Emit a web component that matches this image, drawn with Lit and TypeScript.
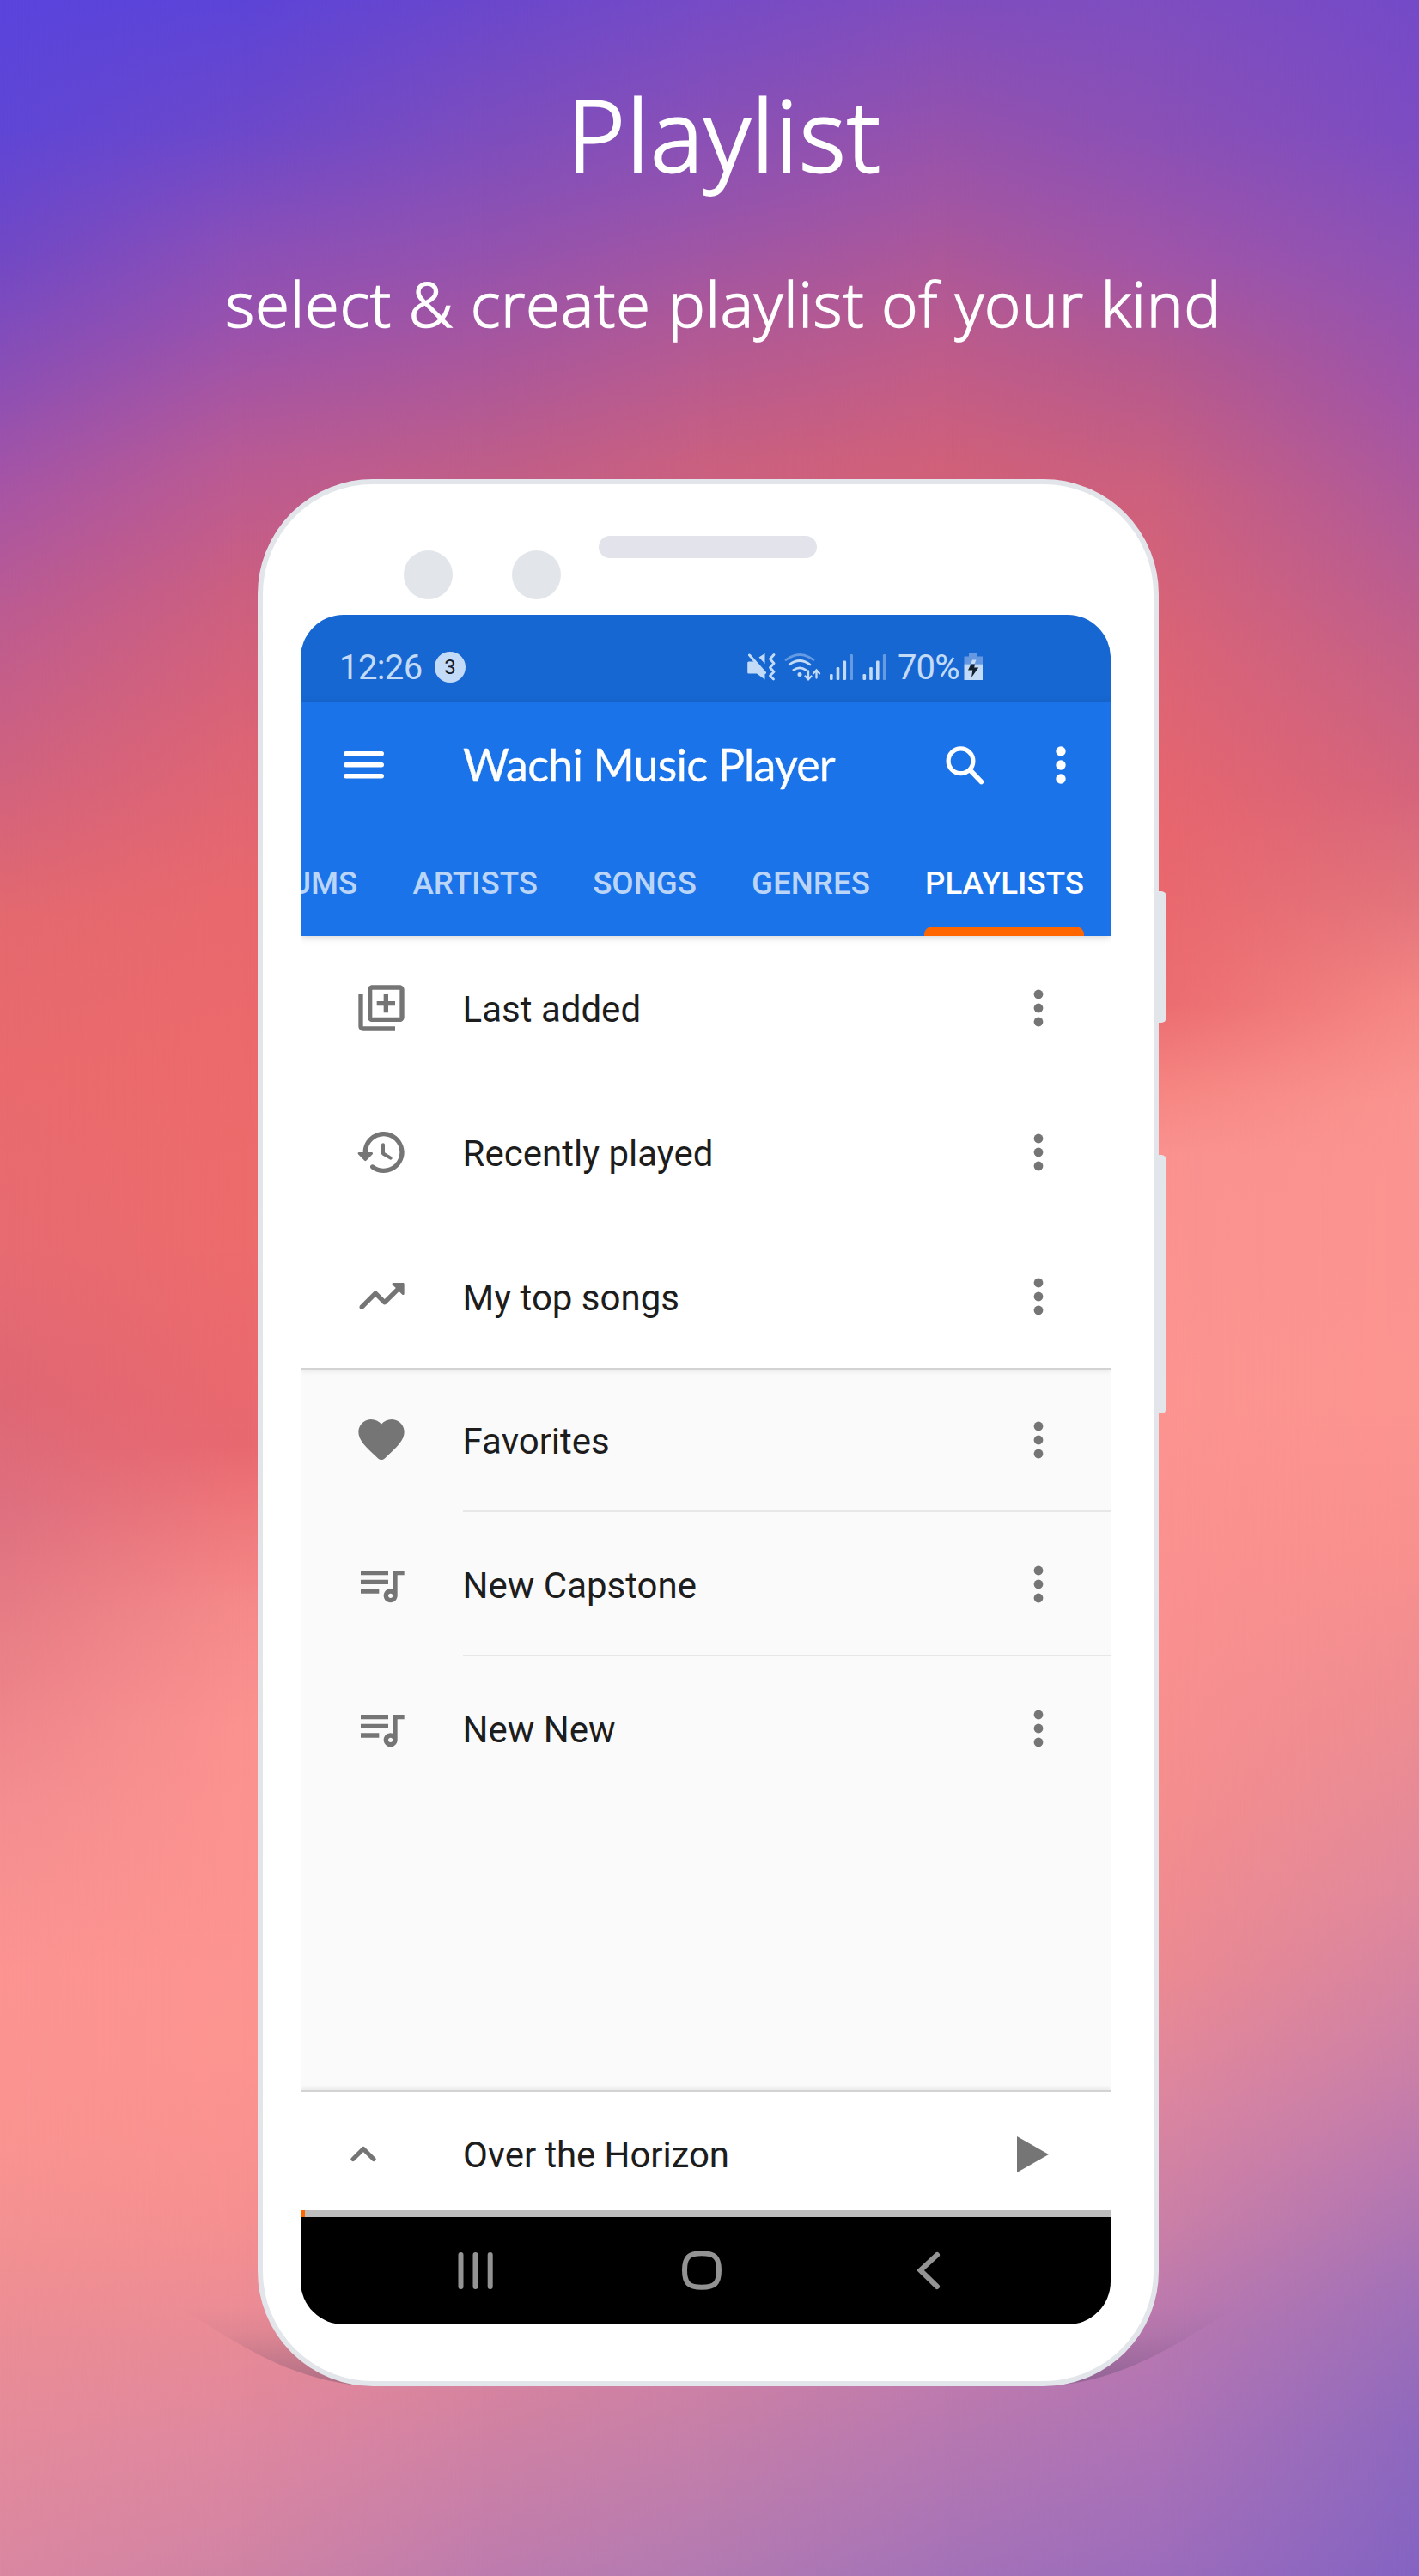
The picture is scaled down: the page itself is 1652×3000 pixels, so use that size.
import { LitElement, html, css, svg } from "lit";
import { customElement } from "lit/decorators.js";

/** Vertical colour ramps of the backdrop: x position in px, then [colour, y px] stops. */
const RAMPS: { x: number; stops: [string, number][] }[] = [
  { x: 0, stops: [["#5a44dc", 0], ["#5f46d6", 150], ["#7048c6", 290], ["#8b4fb5", 440], ["#a855a4", 575], ["#be5c90", 727], ["#d0627f", 900], ["#e4696f", 1070], ["#ea6a6d", 1245], ["#e76b72", 1455], ["#df6774", 1625], ["#de7080", 1760], ["#e97f87", 1913], ["#f48e90", 2105], ["#fc9492", 2296], ["#fa9491", 2487], ["#f29092", 2621], ["#e88c98", 2774], ["#da87a2", 3000]] },
  { x: 280, stops: [["#5c44d8", 0], ["#6c48ca", 153], ["#8a4fb8", 287], ["#9a52ac", 383], ["#b95a94", 536], ["#cc5f80", 689], ["#dc6475", 861], ["#e8686e", 1033], ["#ec6a6b", 1244], ["#ed6b6b", 1435], ["#e86870", 1684], ["#ee777a", 1760], ["#f58a8a", 1875], ["#fb9290", 2009], ["#fc9490", 2392], ["#f69090", 2583], ["#e78a97", 2736], ["#de87a0", 2850], ["#d083a4", 3000]] },
  { x: 560, stops: [["#6a47cc", 0], ["#7c4dbe", 153], ["#9252b0", 287], ["#aa579c", 421], ["#c05e88", 555], ["#e8686e", 1100], ["#fc9490", 2000], ["#fc9490", 2400], ["#d583a0", 2790], ["#be7cae", 3000]] },
  { x: 826, stops: [["#764bc6", 0], ["#844fba", 115], ["#9453ae", 230], ["#b05996", 383], ["#ca6080", 540], ["#e8686e", 1100], ["#fc9490", 2000], ["#f69090", 2400], ["#ca80a6", 2790], ["#b27ab2", 3000]] },
  { x: 1100, stops: [["#804dbe", 0], ["#8f51b1", 115], ["#a055a4", 230], ["#ba5b8e", 383], ["#d0607a", 540], ["#e8686e", 1100], ["#fc9490", 1700], ["#ee8c94", 2400], ["#bc7aae", 2790], ["#a472b8", 3000]] },
  { x: 1350, stops: [["#7e4ec0", 0], ["#8a50b6", 153], ["#a055a8", 306], ["#b4598f", 421], ["#cc607e", 574], ["#dc6475", 765], ["#e8666e", 956], ["#ec6c70", 1170], ["#f68682", 1272], ["#fa9290", 1345], ["#fc9490", 1626], ["#fa9090", 1913], ["#f58e8e", 2105], ["#ec8a92", 2296], ["#dc86a0", 2449], ["#cc80a6", 2583], ["#b878b0", 2717], ["#ac72b6", 2840], ["#9c6cbc", 3000]] },
  { x: 1652, stops: [["#744ac8", 0], ["#7c4cc2", 153], ["#8e52b4", 306], ["#a054a8", 459], ["#b25a98", 612], ["#c46088", 765], ["#d4647c", 918], ["#e2747c", 1052], ["#f48784", 1167], ["#fa9490", 1282], ["#fc9490", 1626], ["#f8908e", 1818], ["#ec8c92", 2009], ["#e0889c", 2200], ["#cc80a6", 2392], ["#b878b0", 2525], ["#a070b8", 2678], ["#8e68be", 2831], ["#8463c2", 3000]] },
];

const rampStyle = (i: number): string => {
  const { x, stops } = RAMPS[i];
  const ramp = `background:linear-gradient(180deg,${stops.map(([c, y]) => `${c} ${y}px`).join(",")});`;
  if (i === 0) return ramp;
  const mask = `linear-gradient(90deg,transparent ${RAMPS[i - 1].x}px,#000 ${x}px)`;
  return `${ramp}-webkit-mask-image:${mask};mask-image:${mask};`;
};

const ICONS = {
  added: svg`<path d="M4 6H2v14c0 1.1.9 2 2 2h14v-2H4V6zm16-4H8c-1.1 0-2 .9-2 2v12c0 1.1.9 2 2 2h12c1.1 0 2-.9 2-2V4c0-1.1-.9-2-2-2zm0 14H8V4h12v12zm-7-2h2v-3h3V9h-3V6h-2v3h-3v2h3z"/>`,
  history: svg`<path d="M13.26 3C8.17 2.86 4 6.95 4 12H2.21c-.45 0-.67.54-.35.85l2.79 2.8c.2.2.51.2.71 0l2.79-2.8c.31-.31.09-.85-.36-.85H6c0-3.9 3.18-7.05 7.1-7 3.72.05 6.85 3.18 6.9 6.9.05 3.91-3.1 7.1-7 7.1-1.61 0-3.1-.55-4.28-1.48-.4-.31-.96-.28-1.32.08-.42.42-.39 1.13.08 1.49C9 20.29 10.91 21 13 21c5.05 0 9.14-4.17 9-9.26-.13-4.69-4.05-8.61-8.74-8.74zm-.51 5c-.41 0-.75.34-.75.75v3.68c0 .35.19.68.49.86l3.12 1.85c.36.21.82.09 1.03-.26.21-.36.09-.82-.26-1.03l-2.88-1.71v-3.4c0-.4-.34-.74-.75-.74z"/>`,
  trending: svg`<path d="M16.85 6.85l1.44 1.44-4.88 4.88-3.29-3.29c-.39-.39-1.02-.39-1.41 0l-6 6.01c-.39.39-.39 1.02 0 1.41.39.39 1.02.39 1.41 0L9.41 12l3.29 3.29c.39.39 1.02.39 1.41 0l5.59-5.58 1.44 1.44c.31.31.85.09.85-.35V6.5c.01-.28-.21-.5-.49-.5h-4.29c-.45 0-.67.54-.36.85z"/>`,
  heart: svg`<path d="M13.35 20.13c-.76.69-1.93.69-2.69-.01l-.11-.1C5.3 15.27 1.87 12.16 2 8.28c.06-1.7.93-3.33 2.34-4.29 2.64-1.8 5.9-.96 7.66 1.1 1.76-2.06 5.02-2.91 7.66-1.1 1.41.96 2.28 2.59 2.34 4.29.14 3.88-3.3 6.99-8.55 11.76l-.1.09z"/>`,
  queue: svg`<path d="M22 6h-5v8.18c-.31-.11-.65-.18-1-.18-1.66 0-3 1.34-3 3s1.34 3 3 3 3-1.34 3-3V8h3V6zm-7 0H3v2h12V6zm0 4H3v2h12v-2zm-4 4H3v2h8v-2zm4 3c0-.55.45-1 1-1s1 .45 1 1-.45 1-1 1-1-.45-1-1z"/>`,
};

type Item = { icon: keyof typeof ICONS; label: string };

const SMART: Item[] = [
  { icon: "added", label: "Last added" },
  { icon: "history", label: "Recently played" },
  { icon: "trending", label: "My top songs" },
];
const CUSTOM: Item[] = [
  { icon: "heart", label: "Favorites" },
  { icon: "queue", label: "New Capstone" },
  { icon: "queue", label: "New New" },
];
const TABS = ["ALBUMS", "ARTISTS", "SONGS", "GENRES", "PLAYLISTS"];

@customElement("phone-status")
export class PhoneStatus extends LitElement {
  static styles = css`
    :host { display: block; height: 101px; background: #1767d2; color: #c4dbf7; font-family: Roboto, sans-serif; }
    .bar { display: flex; align-items: center; height: 122px; padding-left: 45px; }
    .time { font-size: 40px; width: 111px; white-space: nowrap; letter-spacing: -0.6px; }
    .badge { width: 36px; height: 36px; border-radius: 50%; background: #c4dbf7; color: #14202e; font-size: 24px; line-height: 37px; text-align: center; }
    .icons { width: 163px; height: 34px; margin-left: 328px; }
    .pct { font-size: 40px; width: 77px; margin-left: 12px; white-space: nowrap; letter-spacing: -0.9px; }
    .battery { width: 22px; height: 34px; }
    svg { display: block; overflow: visible; flex: none; }
  `;
  render() {
    return html`<div class="bar">
      <span class="time">12:26</span><span class="badge">3</span>
      <svg class="icons" viewBox="870 759 163 34" fill="#c4dbf7" stroke="#c4dbf7" stroke-width="0">
        <path d="M871.500 769.500h6l13 13.500v7.500l-9.500-7h-9.500q-1.300 0-1.300-1.500v-11q0-1.500 1.300-1.500zM890.500 760v12l-7-7.500z" />
        <path d="M872.500 762l18 20.500" stroke-width="3" stroke-linecap="round" />
        <path d="M901 761.500l-4.500 5 4.500 5-4.500 5 4.500 5-4.500 4.500 4 4" fill="none" stroke-width="2.800" stroke-linecap="round" stroke-linejoin="round" />
        <g fill="none" stroke-width="2.700" stroke-linecap="round">
          <path d="M915 767.500q16-12 32 0" opacity="0.450" />
          <path d="M919 773q12-9 24 0M923.800 779.300q7.200-5 14.400 0" />
          <path d="M941 780.500v9.500M937.500 786.500l3.500 3.800 3.500-3.800M950.500 788.500v-8.500M947 783.300l3.500-3.800 3.500 3.800" stroke-width="2.300" />
        </g>
        <circle cx="931" cy="784.500" r="2.500" />
        ${[966, 1004.500].map(
          (x) => svg`<rect x=${x} y="784" width="3.600" height="7" rx="1.300" /><rect x=${x + 7.700} y="776" width="3.600" height="15" rx="1.300" /><rect x=${x + 15.500} y="768.500" width="3.600" height="22.500" rx="1.300" /><rect x=${x + 23.400} y="761" width="3.600" height="30" rx="1.300" opacity="0.450" />`
        )}
      </svg>
      <span class="pct">70%</span>
      <svg class="battery" viewBox="1122 759 22 34">
        <path d="M1128 759.500h10v4h6v9h-21.500v-9h5.500z" fill="#6598e0" />
        <path d="M1122.500 772.500h21.500v18.500h-21.500z" fill="#c4dbf7" />
        <path d="M1132 767.500h4.500l-2 5h-4.500z" fill="#c4dbf7" />
        <path d="M1130.500 772.500h4.500l-.8 4h5l-8.200 11.500 1.300-8.500h-5.300z" fill="#14202e" />
      </svg>
    </div>`;
  }
}

@customElement("app-header")
export class AppHeader extends LitElement {
  static styles = css`
    :host { display: block; position: relative; z-index: 1; height: 273px; background: #1a73e9; color: #fff; box-shadow: 0 2px 8px rgba(0, 0, 0, 0.16); }
    .top { display: flex; align-items: center; height: 147px; padding-left: 50px; }
    .title { font-family: Lato, sans-serif; font-size: 52px; line-height: 60px; width: 561px; margin-left: 92px; padding-bottom: 2px; white-space: nowrap; letter-spacing: -0.8px; -webkit-text-stroke: 0.3px #fff; }
    .tabs { display: flex; justify-content: flex-end; gap: 64.200px; height: 126px; padding-right: 31px; overflow: hidden; font-family: Roboto, sans-serif; font-weight: 500; font-size: 36.700px; line-height: 129px; color: #bad5f8; }
    .tab { position: relative; height: 126px; white-space: nowrap; }
    .tab.on { color: #fff; }
    .mark { position: absolute; left: -1px; right: 0; bottom: 0; height: 11px; border-radius: 9px 9px 0 0; background: #ff6600; }
    svg { display: block; flex: none; }
    .search { margin-right: 81px; }
  `;
  render() {
    return html`
      <div class="top">
        <svg width="47" height="32" viewBox="0 0 47 32" fill="#fff">
          ${[0, 13, 26].map((y) => svg`<rect y=${y} width="47" height="5.400" rx="2.700" />`)}
        </svg>
        <span class="title">Wachi Music Player</span>
        <svg class="search" width="48" height="46" viewBox="0 0 48 46" fill="none" stroke="#fff">
          <circle cx="18.500" cy="18.300" r="14.400" stroke-width="5.200" />
          <path d="M30.500 30L42.500 42.500" stroke-width="5.600" stroke-linecap="round" />
        </svg>
        <svg width="12" height="44" viewBox="0 0 12 44" fill="#fff">
          ${[6, 22, 38].map((y) => svg`<circle cx="6" cy=${y} r="5.700" />`)}
        </svg>
      </div>
      <div class="tabs">
        ${TABS.map((t, i) => html`<span class="tab ${i === 4 ? "on" : ""}">${t}${i === 4 ? html`<i class="mark"></i>` : ""}</span>`)}
      </div>`;
  }
}

@customElement("playlist-row")
export class PlaylistRow extends LitElement {
  static properties = { item: { attribute: false } };
  declare item: Item;
  static styles = css`
    :host { display: block; }
    .row { display: flex; align-items: center; height: 100%; padding: 0 78px 0 62px; }
    .label { flex: 1; margin-left: 62.600px; font: 400 42px/50px Roboto, sans-serif; color: #1d1d1d; padding-top: 4px; white-space: nowrap; }
    svg { display: block; flex: none; }
  `;
  render() {
    return html`<div class="row">
      <svg width="64" height="64" viewBox="0 0 24 24" fill="#757575">${ICONS[this.item.icon]}</svg>
      <span class="label">${this.item.label}</span>
      <svg width="12" height="44" viewBox="0 0 12 44" fill="#757575">
        ${[6, 22, 38].map((y) => svg`<circle cx="6" cy=${y} r="5.400" />`)}
      </svg>
    </div>`;
  }
}

@customElement("app-root")
export class AppRoot extends LitElement {
  static styles = css`
    :host { display: block; width: 1652px; height: 3000px; overflow: hidden; }
    .stage { position: relative; height: 3000px; overflow: hidden; isolation: isolate; }
    .ramp { position: absolute; inset: 0; z-index: -2; }
    .heading { display: flex; flex-direction: column; align-items: center; height: 558px; padding-left: 40px; box-sizing: border-box; color: #fff; font-family: "Open Sans", sans-serif; font-weight: 300; white-space: nowrap; }
    .h1 { font-size: 115px; line-height: 160px; margin: 76px 0 0 -5px; font-weight: 300; letter-spacing: 1.900px; -webkit-text-stroke: 2.800px #fff; }
    .h2 { font-size: 72px; line-height: 100px; margin: 67px 0 0 -7px; font-weight: 300; letter-spacing: 1.050px; -webkit-text-stroke: 1.700px #fff; }
    .phone { position: relative; width: 1049px; height: 2221px; margin-left: 300px; box-sizing: border-box; border: 6px solid #e2e6ea; border-radius: 134px; background: #fff; padding: 152px 50px 66px 44px; }
    .key { position: absolute; left: 1042px; width: 10px; border-radius: 0 6px 6px 0; background: #e2e6ea; }
    .up { top: 474px; height: 153px; }
    .down { top: 781px; height: 301px; }
    .lens { position: absolute; top: 77px; width: 57px; height: 57px; border-radius: 50%; background: #e2e6ea; }
    .l1 { left: 164px; }
    .l2 { left: 290px; }
    .speaker { position: absolute; left: 391px; top: 60px; width: 254px; height: 26px; border-radius: 13px; background: #e3e3ec; }
    .shadow { position: absolute; z-index: -1; left: 200px; top: 2670px; }
    .screen { display: flex; flex-direction: column; width: 943px; height: 1991px; border-radius: 50px; overflow: hidden; background: #fafafa; }
    .smart { display: grid; grid-template-rows: repeat(3, 168px); height: 505px; background: #fff; border-bottom: 2px solid #d3d3d3; box-shadow: 0 2px 6px rgba(0, 0, 0, 0.08); box-sizing: border-box; flex: none; }
    .custom { flex: 1; display: flex; flex-direction: column; margin-top: -2px; }
    .custom playlist-row { height: 166px; padding-top: 2px; box-sizing: border-box; }
    .line { height: 2px; background: #e7e7e7; margin-left: 189px; }
    .player { display: flex; align-items: center; height: 140px; box-sizing: border-box; background: #fff; border-top: 2px solid #d3d3d3; box-shadow: 0 -2px 5px rgba(0, 0, 0, 0.08); padding: 7px 0 0 58px; flex: none; }
    .song { width: 645px; margin-left: 101px; font: 400 42px/50px Roboto, sans-serif; letter-spacing: -0.100px; color: #1d1d1d; padding-top: 3px; white-space: nowrap; }
    .player svg { display: block; flex: none; }
    .progress { height: 8px; background: #bdbdbd; flex: none; }
    .done { width: 5px; height: 8px; background: #ff6600; }
    .nav { height: 125px; background: #000; padding: 38px 0 0 182px; box-sizing: border-box; flex: none; }
  `;
  render() {
    return html`<div class="stage">
      ${RAMPS.map((_, i) => html`<div class="ramp" style=${rampStyle(i)}></div>`)}
      <svg class="shadow" width="1250" height="112" viewBox="200 2670 1250 112">
        <defs>
          <linearGradient id="wing" x1="0" y1="0" x2="0" y2="1">
            <stop offset="0" stop-color="#303048" stop-opacity="0" />
            <stop offset="0.350" stop-color="#303048" stop-opacity="0.050" />
            <stop offset="1" stop-color="#303048" stop-opacity="0.280" />
          </linearGradient>
        </defs>
        <path fill="url(#wing)" d="M205 2686C260 2715 330 2776 436 2779H1212C1318 2776 1388 2715 1443 2686Z" />
      </svg>
      <header class="heading">
        <h1 class="h1">Playlist</h1>
        <p class="h2">select &amp; create playlist of your kind</p>
      </header>
      <main class="phone">
        <i class="key up"></i><i class="key down"></i>
        <i class="lens l1"></i><i class="lens l2"></i><i class="speaker"></i>
        <div class="screen">
          <phone-status></phone-status>
          <app-header></app-header>
          <div class="smart">${SMART.map((it) => html`<playlist-row .item=${it}></playlist-row>`)}</div>
          <div class="custom">
            ${CUSTOM.map((it, i) => html`<playlist-row .item=${it}></playlist-row>${i < 2 ? html`<div class="line"></div>` : ""}`)}
          </div>
          <div class="player">
            <svg width="30" height="19" viewBox="0 0 30 19" fill="none" stroke="#757575" stroke-width="5.300" stroke-linecap="round" stroke-linejoin="round"><path d="M3 15.500L15 3.500L27 15.500" /></svg>
            <span class="song">Over the Horizon</span>
            <svg width="37" height="42" viewBox="0 0 37 42" fill="#757575"><path d="M0 0L37 21L0 42z" /></svg>
          </div>
          <div class="progress"><div class="done"></div></div>
          <div class="nav">
            <svg width="580" height="50" viewBox="532 2620 580 50" fill="none" stroke="#939393" stroke-width="6" stroke-linecap="round">
              <path d="M536.500 2626v37M553.500 2626v37M570.700 2626v37" />
              <path d="M817 2624.300c15 0 20 4.500 20 19.700s-5 19.700-20 19.700-20-4.500-20-19.700 5-19.700 20-19.700z" />
              <path d="M1091 2626L1071.500 2644L1091 2663" />
            </svg>
          </div>
        </div>
      </main>
    </div>`;
  }
}
